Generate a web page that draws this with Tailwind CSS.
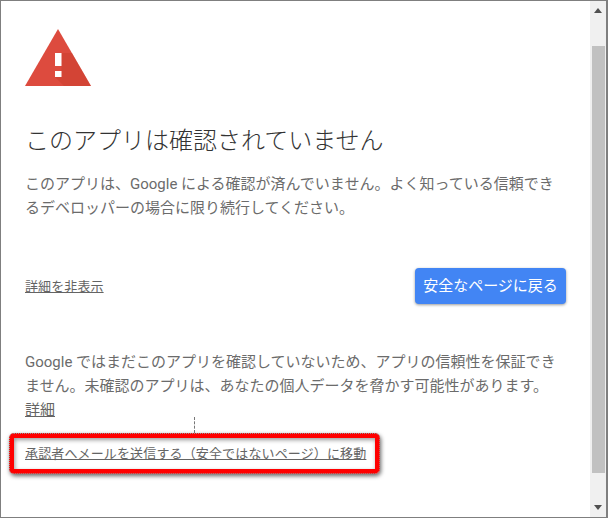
<!DOCTYPE html>
<html lang="ja">
<head>
    <meta charset="UTF-8">
    <title>このアプリは確認されていません</title>
    <script src="https://cdn.jsdelivr.net/npm/@tailwindcss/browser@4"></script>
</head>
<body class="bg-white font-['Roboto','Noto_Sans_CJK_JP',sans-serif]">
    <div class="w-[608px] h-[518px] border border-[#7f7f7f] border-r-2 flex overflow-hidden">
        <!-- Main content -->
        <main class="w-[589px] pl-6 relative">
            <svg class="mt-7 block" width="67" height="58" viewBox="0 0 67 58">
                <polygon points="33,0 66,57 0,57" fill="#dd4b3e"/>
                <polygon points="36.5,24 36.5,48 30,48 39,57 66,57 47,24" fill="#c53929" opacity="0.4"/>
                <rect x="30" y="24" width="6.5" height="13" fill="#fff"/>
                <rect x="30" y="42" width="6.5" height="6" fill="#fff"/>
            </svg>
            <h1 class="mt-[36px] text-[24px] leading-[36px] font-light text-[#333]">このアプリは確認されていません</h1>
            <p class="mt-[13px] w-[540px] text-[15px] leading-[24px] text-[#6b6b6b]">このアプリは、Google による確認が済んでいません。よく知っている信頼できるデベロッパーの場合に限り続行してください。</p>

            <div class="mt-[48px] flex items-center justify-between w-[541px]">
                <a class="text-[13px] leading-[20px] text-[#646464] underline mt-[1px] tracking-[0.1px]">詳細を非表示</a>
                <button class="w-[151px] h-[36px] rounded-[4px] bg-[#4285f4] text-white text-[15px] shadow-[0_1px_3px_rgba(0,0,0,0.4)]">安全なページに戻る</button>
            </div>

            <p class="mt-[46px] w-[540px] text-[15px] leading-[24px] text-[#6b6b6b]">Google ではまだこのアプリを確認していないため、アプリの信頼性を保証できません。未確認のアプリは、あなたの個人データを脅かす可能性があります。</p>
            <a class="block text-[15px] leading-[24px] text-[#646464] underline w-fit">詳細</a>
            <a class="block mt-[22px] text-[13px] leading-[20px] text-[#646464] underline w-fit tracking-[0.14px]">承認者へメールを送信する（安全ではないページ）に移動</a>

            <!-- Red highlight over the link -->
            <div class="absolute left-[8px] top-[432px] w-[371px] h-[41px] rounded-[5px] border-[5px] border-[#ff0000] outline-1 outline-dotted outline-offset-[-1px] outline-[#999] shadow-[1px_2px_4px_rgba(0,0,0,0.6),inset_1px_2px_4px_rgba(0,0,0,0.4)]"></div>
            <div class="absolute left-[193px] top-[416px] h-[16px] border-l border-dashed border-[#777]"></div>
        </main>

        <!-- Scrollbar -->
        <div class="w-[16px] bg-[#f0f0f0] flex flex-col items-center justify-between">
            <svg class="mt-[7px]" width="8" height="5" viewBox="0 0 8 5"><polygon points="4,0 8,5 0,5" fill="#505050"/></svg>
            <div class="w-[13px] flex-1 mt-[33px] mb-[32px] ml-[1px] bg-[#c1c1c1]"></div>
            <svg class="mb-[7px]" width="8" height="5" viewBox="0 0 8 5"><polygon points="0,0 8,0 4,5" fill="#505050"/></svg>
        </div>
    </div>
</body>
</html>
